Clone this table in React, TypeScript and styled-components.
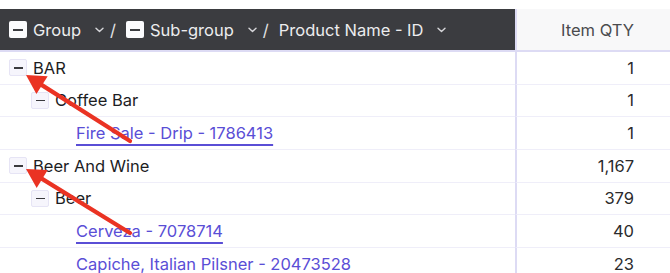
import React from "react";
import styled, { createGlobalStyle } from "styled-components";

const Global = createGlobalStyle`
  html, body { margin: 0; padding: 0; background: #ffffff; }
  body { font-family: Inter, "Noto Sans", "Liberation Sans", sans-serif; }
  * { box-sizing: border-box; }
`;

const Page = styled.div`
  position: relative;
  width: 670px;
  height: 273px;
  overflow: hidden;
  padding-top: 9px;
  background: #ffffff;
`;

const Grid = styled.div`
  display: grid;
  grid-template-columns: 515px 1fr;
`;

const HeaderLeft = styled.div`
  height: 43px;
  background: #3b3c40;
  border-bottom: 2px solid #dddbf4;
  display: flex;
  align-items: center;
  padding-left: 9px;
  color: #ececee;
  font-size: 16.5px;
`;

const HeaderRight = styled.div`
  height: 43px;
  background: #f8f8f9;
  border-left: 2px solid #dddbf4;
  border-bottom: 2px solid #dddbf4;
  display: flex;
  align-items: center;
  justify-content: flex-end;
  padding-right: 36px;
  color: #4a4a4d;
  font-size: 16.5px;
`;

const HeaderBox = styled.span`
  width: 18px;
  height: 17px;
  background: #fbfbfd;
  border-radius: 2px;
  display: inline-flex;
  align-items: center;
  justify-content: center;
  margin-right: 6px;
  flex: none;
  &::after {
    content: "";
    width: 10px;
    height: 2px;
    background: #3b3c40;
  }
`;

const HeaderLabel = styled.span`
  white-space: nowrap;
`;

const Chevron = styled.svg`
  margin-left: 14px;
  margin-right: 6px;
  flex: none;
`;

const Slash = styled.span`
  margin-right: 10px;
  color: #e4e4e6;
`;

const Cell = styled.div<{ $level: number; $leaf?: boolean }>`
  height: 32.67px;
  border-bottom: 1px solid #efeef9;
  display: flex;
  align-items: center;
  padding-left: ${(p) => 9 + p.$level * 22 + (p.$leaf ? 23 : 0)}px;
  font-size: 16.5px;
  color: #1d1d1f;
  white-space: nowrap;
`;

const NumCell = styled.div`
  height: 32.67px;
  border-bottom: 1px solid #efeef9;
  border-left: 2px solid #dddbf4;
  display: flex;
  align-items: center;
  justify-content: flex-end;
  padding-right: 36px;
  font-size: 16.5px;
  color: #2b2b2d;
`;

const Toggle = styled.span`
  width: 18px;
  height: 17px;
  border: 1px solid #e6e4f5;
  background: #f6f5fc;
  border-radius: 2px;
  display: inline-flex;
  align-items: center;
  justify-content: center;
  margin-right: 6px;
  flex: none;
  &::after {
    content: "";
    width: 9px;
    height: 1.5px;
    background: #3a3a3d;
  }
`;

const Link = styled.a`
  color: #5a4ed6;
  text-decoration: underline;
  text-decoration-thickness: 1.5px;
  text-underline-offset: 5px;
  cursor: pointer;
`;

const Overlay = styled.svg`
  position: absolute;
  left: 0;
  top: 0;
  pointer-events: none;
`;

type Row = { level: number; label: string; qty: string; leaf?: boolean };

const rows: Row[] = [
  { level: 0, label: "BAR", qty: "1" },
  { level: 1, label: "Coffee Bar", qty: "1" },
  { level: 2, label: "Fire Sale - Drip - 1786413", qty: "1", leaf: true },
  { level: 0, label: "Beer And Wine", qty: "1,167" },
  { level: 1, label: "Beer", qty: "379" },
  { level: 2, label: "Cerveza - 7078714", qty: "40", leaf: true },
  { level: 2, label: "Capiche, Italian Pilsner - 20473528", qty: "23", leaf: true },
];

const ChevronIcon = () => (
  <Chevron width="9" height="6" viewBox="0 0 9 6">
    <path d="M1 1.2 L4.5 4.6 L8 1.2" fill="none" stroke="#d6d6da" strokeWidth="1.4" strokeLinecap="round" strokeLinejoin="round" />
  </Chevron>
);

const Arrow = ({ x1, y1, x2, y2 }: { x1: number; y1: number; x2: number; y2: number }) => {
  const dx = x2 - x1;
  const dy = y2 - y1;
  const len = Math.hypot(dx, dy);
  const ux = dx / len;
  const uy = dy / len;
  const headLen = 19;
  const headW = 10.5;
  const bx = x2 - ux * headLen;
  const by = y2 - uy * headLen;
  const px = -uy;
  const py = ux;
  const pts = `${x2},${y2} ${bx + px * headW},${by + py * headW} ${bx - px * headW},${by - py * headW}`;
  return (
    <g>
      <line x1={x1} y1={y1} x2={bx + ux * 2} y2={by + uy * 2} stroke="#ea3323" strokeWidth="4.2" strokeLinecap="round" />
      <polygon points={pts} fill="#ea3323" />
    </g>
  );
};

export default function App() {
  return (
    <Page>
      <Global />
      <Grid>
        <HeaderLeft>
          <HeaderBox />
          <HeaderLabel>Group</HeaderLabel>
          <ChevronIcon />
          <Slash>/</Slash>
          <HeaderBox />
          <HeaderLabel>Sub-group</HeaderLabel>
          <ChevronIcon />
          <Slash>/</Slash>
          <HeaderLabel>Product Name - ID</HeaderLabel>
          <ChevronIcon />
        </HeaderLeft>
        <HeaderRight>Item QTY</HeaderRight>
        {rows.map((r, i) => (
          <React.Fragment key={i}>
            <Cell $level={r.level} $leaf={r.leaf}>
              {!r.leaf && <Toggle />}
              {r.leaf ? <Link>{r.label}</Link> : <span>{r.label}</span>}
            </Cell>
            <NumCell>{r.qty}</NumCell>
          </React.Fragment>
        ))}
      </Grid>
      <Overlay width="670" height="273" viewBox="0 0 670 273">
        <Arrow x1={130} y1={141} x2={26} y2={75} />
        <Arrow x1={130} y1={233} x2={26} y2={169} />
      </Overlay>
    </Page>
  );
}
